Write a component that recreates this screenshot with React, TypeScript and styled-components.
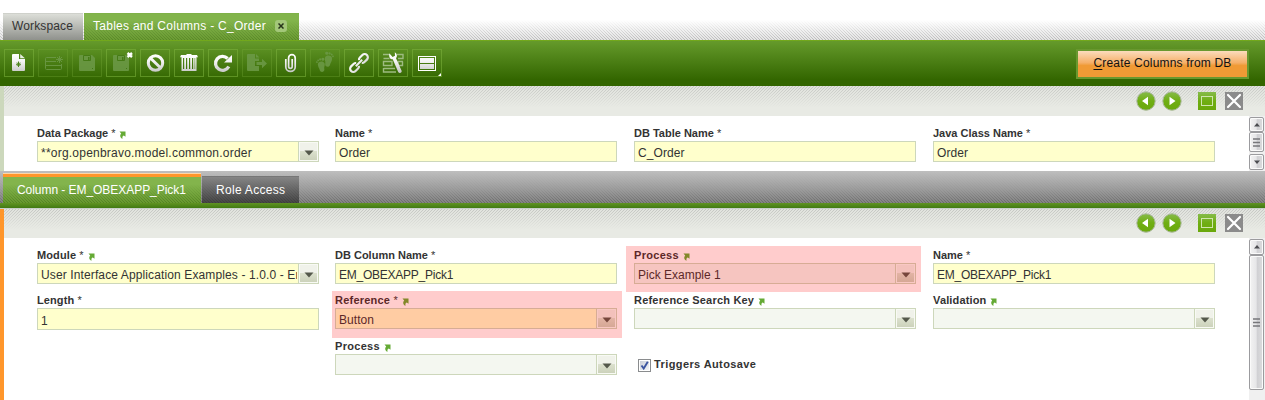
import React from "react";
import styled, { createGlobalStyle, css } from "styled-components";

const GlobalStyle = createGlobalStyle`
  *, *::before, *::after { box-sizing: border-box; }
  html, body { margin: 0; padding: 0; overflow: hidden; background: #fff; }
  body { font-family: "Liberation Sans", Arial, sans-serif; color: #333; }
  svg { display: block; flex: none; }
`;

const hatch = (color: string, angle = 45) =>
  `linear-gradient(${angle}deg, ${color} 16.6%, transparent 16.6% 50%, ${color} 50% 66.6%, transparent 66.6%) 0 0 / 3px 3px`;

const Window = styled.div`
  width: 1265px;
  height: 400px;
  display: flex;
  flex-direction: column;
  overflow: hidden;
`;

const TopTabs = styled.div`
  height: 40px;
  padding: 13px 0 0 3px;
  display: flex;
  gap: 1px;
  align-items: flex-start;
  background: linear-gradient(#fff 50%, rgba(255, 255, 255, 0)), ${hatch("#b9b9b9")}, #e4e4e4;
`;

const TopTab = styled.div<{ $active?: boolean; $width: number }>`
  width: ${(p) => p.$width}px;
  height: 27px;
  padding: 0 0 2px 9px;
  display: flex;
  align-items: center;
  font-size: 12px;
  white-space: pre;
  border-top: 1px solid ${(p) => (p.$active ? "#7fb148" : "#cfd1cb")};
  ${(p) =>
    p.$active
      ? css`
          color: #fff;
          letter-spacing: 0.27px;
          background: linear-gradient(#82b44b 25%, rgba(110, 160, 50, 0.2)), ${hatch("#527f25")}, #6a9a33;
        `
      : css`
          color: #333;
          letter-spacing: 0.14px;
          background: linear-gradient(#dcded8, #8f918c);
        `}
`;

const CloseBadge = styled.span`
  width: 12px;
  height: 12px;
  margin-left: 9px;
  border-radius: 3px;
  display: grid;
  place-items: center;
  background: #a3c779;
`;

const Toolbar = styled.div`
  height: 46px;
  padding: 0 16px 0 4px;
  display: flex;
  align-items: center;
  border-top: 1px solid #72a81c;
  background: linear-gradient(#659a2b, #336600 86%);
`;

const ToolButtons = styled.div`
  display: flex;
  gap: 4px;
  margin-top: -1px;
`;

const ToolButton = styled.div<{ $off?: boolean }>`
  width: 30px;
  height: 28px;
  border: 1px solid ${(p) => (p.$off ? "rgba(120,170,60,.32)" : "rgba(125,178,62,.55)")};
  svg { margin: -1px; }
`;

const ActionButton = styled.div`
  width: 173px;
  height: 30px;
  margin-left: auto;
  padding-bottom: 1px;
  border: 2px solid #69982f;
  display: flex;
  align-items: center;
  justify-content: center;
  color: #111;
  font-size: 12px;
  letter-spacing: 0.18px;
  white-space: pre;
  background: linear-gradient(#fbdcbd, #f5b069 45%, #f09a35 56%, #f09a35);
  u { text-underline-offset: 2px; text-decoration-thickness: 1px; }
`;

const Panel = styled.div<{ $color: string; $height: number }>`
  height: ${(p) => p.$height}px;
  flex: none;
  border-left: 4px solid ${(p) => p.$color};
  display: flex;
  flex-direction: column;
`;

const PanelBar = styled.div<{ $height: number; $low?: number }>`
  height: ${(p) => p.$height}px;
  flex: none;
  padding: 0 22px ${(p) => p.$low ?? 0}px 0;
  display: flex;
  justify-content: flex-end;
  align-items: center;
  background: linear-gradient(rgba(232, 234, 228, 0.1), #e8eae4 72%), ${hatch("#c0c2be", 135)}, #e0e2dd;
`;

const PanelBody = styled.div`
  flex: 1;
  min-height: 0;
  display: flex;
  justify-content: space-between;
  background: #fff;
`;

const Form = styled.div`
  padding: 7px 0 0 28px;
  display: grid;
  grid-template-columns: 290px 294px 295px 290px;
  column-gap: 4px;
  align-content: start;
`;

const Cell = styled.div<{ $height: number; $mark?: number; $pad?: number; $shift?: number; $width?: number }>`
  height: ${(p) => p.$height}px;
  width: ${(p) => (p.$width ? `${p.$width}px` : "auto")};
  padding: 4px 0 0 ${(p) => p.$pad ?? 5}px;
  margin-left: ${(p) => p.$shift ?? 0}px;
  position: relative;
  ${(p) =>
    p.$mark &&
    css`
      &::after {
        content: "";
        position: absolute;
        left: 0;
        right: 0;
        top: 1px;
        height: ${p.$mark}px;
        background: rgba(255, 0, 0, 0.2);
      }
    `}
`;

const Label = styled.div<{ $spacing: number }>`
  height: 14px;
  padding-bottom: 1px;
  display: flex;
  align-items: center;
  gap: 4px;
  font-size: 11px;
  font-weight: bold;
  line-height: 13px;
  letter-spacing: ${(p) => p.$spacing}px;
  white-space: pre;
  svg { margin-top: 2px; }
  i { font-style: normal; font-weight: normal; }
`;

const Input = styled.div<{ $empty?: boolean; $tall?: boolean }>`
  width: 282px;
  height: ${(p) => (p.$tall ? 22 : 21)}px;
  display: flex;
  border: 1px solid #cdd7bb;
  background: ${(p) => (p.$empty ? "#f4f7f0" : "#ffffcc")};
`;

const Value = styled.div<{ $tall?: boolean; $spacing: number }>`
  flex: 1;
  min-width: 0;
  padding: ${(p) => (p.$tall ? 2 : 1)}px 0 0 3px;
  margin-right: 1px;
  overflow: hidden;
  white-space: pre;
  font-size: 12px;
  line-height: 20px;
  letter-spacing: ${(p) => p.$spacing}px;
`;

const Drop = styled.div`
  width: 20px;
  border-left: 1px solid #cdd7bb;
  border-right: 1px solid #f8faf4;
  padding: 1px 0 1px 1px;
  background: #f8faf4;
  div {
    height: 100%;
    padding-top: 2px;
    display: grid;
    place-items: center;
    background: linear-gradient(#f0f2ea 0 48%, #dbe0cd 50%, #ccd2bb);
  }
`;

const CheckLine = styled.div`
  padding: 19px 0 0 9px;
  display: flex;
  gap: 3px;
  font-size: 11px;
  font-weight: bold;
  letter-spacing: 0.4px;
  line-height: 11px;
`;

const CheckBox = styled.div`
  width: 13px;
  height: 13px;
  border: 1px solid #8a8c8e;
  padding: 1px;
  background: #fff;
  svg { background: linear-gradient(135deg, #c9ced8, #f3f5f7); }
`;

const ScrollTrack = styled.div`
  width: 16px;
  padding: 1px 1px 0 0;
  display: flex;
  flex-direction: column;
  background: #f0f0f0;
`;

const ScrollPart = styled.div<{ $height: number; $gap?: number }>`
  height: ${(p) => p.$height}px;
  margin-top: ${(p) => p.$gap ?? 0}px;
  flex: none;
  display: grid;
  place-items: center;
  border: 1px solid #9b9b9e;
  border-radius: 2px;
  box-shadow: inset 0 0 0 1px #fafafa;
  background: linear-gradient(90deg, #f3f3f3, #e6e6e8 48%, #d0d0d3 55%, #dcdcde);
`;

const MidTabs = styled.div`
  height: 38px;
  flex: none;
  padding: 2px 0 0 3px;
  display: flex;
  align-items: flex-end;
  gap: 1px;
  border-bottom: 1px solid #c7cec9;
  background:
    linear-gradient(#609323, #417a12) 0 32px / 100% 5px no-repeat,
    linear-gradient(#bebebe, rgba(160, 160, 160, 0.85) 50%, rgba(120, 120, 120, 0.3) 88%),
    ${hatch("#606060")}, #868686;
`;

const MidTab = styled.div<{ $active?: boolean; $width: number }>`
  width: ${(p) => p.$width}px;
  height: ${(p) => (p.$active ? 30 : 27)}px;
  margin-bottom: 5px;
  padding-left: 14px;
  font-size: 12px;
  color: #fff;
  white-space: pre;
  ${(p) =>
    p.$active
      ? css`
          letter-spacing: -0.05px;
          border-top: 1px solid #ffd6a6;
          box-shadow: inset 0 3px #ff962b;
          line-height: 32px;
          background: linear-gradient(#83b44c 35%, rgba(100, 150, 45, 0.25)), ${hatch("#4c7a1f")}, #68992f;
        `
      : css`
          letter-spacing: 0.3px;
          border-top: 1px solid #777;
          line-height: 26px;
          background: linear-gradient(#858585, rgba(65, 65, 65, 0.5)), ${hatch("#363636")}, #4a4a4a;
        `}
`;

const TinyArrow = () => (
  <svg width="7" height="8" viewBox="0 0 7 8">
    <path d="M.5.5h6v5.300L4.800 4.400C3.400 5 3.200 6.200 3.600 7.800 1.200 6.800.4 4.400 2.200 2.400z" fill="#65aa35" />
  </svg>
);

type FieldProps = {
  label: string;
  value?: string;
  required?: boolean;
  link?: boolean;
  combo?: boolean;
  tall?: boolean;
  optional?: boolean;
  labelSpacing?: number;
  spacing?: number;
};

const Field = ({ label, value, required, link, combo, tall, optional, labelSpacing = 0.1, spacing = 0.1 }: FieldProps) => (
  <>
    <Label $spacing={labelSpacing}>
      <span>
        {label}
        {required && <i> *</i>}
      </span>
      {link && <TinyArrow />}
    </Label>
    <Input $empty={optional} $tall={tall}>
      <Value $tall={tall} $spacing={spacing}>{value}</Value>
      {combo && (
        <Drop>
          <div>
            <svg width="10" height="6"><path d="M.5.5h9L5 5.5z" fill="#54584b" /></svg>
          </div>
        </Drop>
      )}
    </Input>
  </>
);

const PanelControls = () => (
  <svg width="108" height="20" viewBox="0 0 108 20">
    <defs>
      <linearGradient id="leaf" x1="0" y1="0" x2="0" y2="1">
        <stop offset="0" stopColor="#86bb4a" />
        <stop offset=".5" stopColor="#6fae12" />
        <stop offset="1" stopColor="#6aa80c" />
      </linearGradient>
    </defs>
    <g fill="url(#leaf)" stroke="#a9b79b" strokeWidth="1">
      <circle cx="11" cy="10" r="9.2" />
      <circle cx="37" cy="10" r="9.2" />
    </g>
    <path d="M7 10l6-4.2v8.4zM40.500 10l-6-4.200v8.400z" fill="#fff" />
    <rect x="63" y="1" width="18" height="18" fill="url(#leaf)" />
    <rect x="66.500" y="5.500" width="11" height="9" fill="none" stroke="#cfe5ae" />
    <rect x="90" y="1" width="18" height="18" fill="#8b8b8b" />
    <path d="M93 4l12 12M105 4L93 16" stroke="#fff" strokeWidth="2.200" strokeLinecap="round" />
  </svg>
);

const Chevron = ({ down }: { down?: boolean }) => (
  <svg width="6" height="4"><path d={down ? "M0 .5h6L3 4z" : "M0 3.500h6L3 0z"} fill="#4b4c50" /></svg>
);

const Grip = () => (
  <svg width="8" height="9">
    <path d="M0 1h7M0 4.500h7M0 8h7" stroke="#77777b" strokeWidth="1.600" />
  </svg>
);

const W = "url(#silver)";
const G = "#6d9a48";

const Floppy = () => (
  <>
    <path d="M8 6h12l3 3v12a1 1 0 0 1-1 1H8a1 1 0 0 1-1-1V7a1 1 0 0 1 1-1z" fill={G} />
    <path d="M11.500 6.500h7v5h-7z" fill="none" stroke="#457a17" />
    <path d="M16 8h1.500v3H16zM20 19h1v1h-1z" fill="#457a17" />
  </>
);

const Footprint = () => (
  <>
    <path d="M.8 6.500C1.200 3.200 7 3 8 6.500c.5 2.500-1.600 3.500-1.300 6 .3 3.200-4.600 3.600-4.900.4C1.600 10.500.5 9 .8 6.500z" />
    <circle cx="7" cy="2" r="1.600" />
    <circle cx="4.200" cy="1.600" r="1.200" />
    <circle cx="1.900" cy="2.400" r="1" />
    <circle cx=".3" cy="4" r=".9" />
  </>
);

const tools: { off?: boolean; icon: React.ReactNode }[] = [
  {
    icon: (
      <>
        <path d="M9 5h6v5h6v11a1 1 0 0 1-1 1H9a1 1 0 0 1-1-1V6a1 1 0 0 1 1-1z" fill={W} />
        <path d="M16.200 5L21 9.200h-4.800z" fill="#e8eee2" />
        <path d="M14.500 12.500v5.500M12 15.250h5M13 13.600l3 3.200M16 13.600l-3 3.200" stroke="#4c841c" />
      </>
    ),
  },
  {
    off: true,
    icon: (
      <g fill="none" stroke={G}>
        <path d="M18 8.500H8.500a1 1 0 0 0-1 1v10a1 1 0 0 0 1 1h14a1 1 0 0 0 1-1V15M7.500 12.500H18M7.500 16.500h16" />
        <path d="M21.500 7v7M18 10.500h7M19 8l5 5M24 8l-5 5" />
      </g>
    ),
  },
  { off: true, icon: <Floppy /> },
  {
    icon: (
      <>
        <g opacity=".85"><Floppy /></g>
        <path d="M21.500 4l4.500 4M26 4l-4.500 4" stroke="#fff" strokeWidth="2.400" />
      </>
    ),
  },
  {
    icon: (
      <g fill="none" stroke={W} strokeWidth="3">
        <circle cx="15.500" cy="14" r="7.200" />
        <path d="M10.300 9l10.400 10" />
      </g>
    ),
  },
  {
    icon: (
      <path
        fillRule="evenodd"
        fill={W}
        d="M12.500 6V5h5v1H23l1 2.200h-1.500V22h-15V8.200H6L7 6zM9 9h1.200v11H9zM12 9h1.200v11H12zM15 9h1.200v11H15zM18 9h1.200v11H18zM20.600 9h.6v11h-.6z"
      />
    ),
  },
  {
    icon: (
      <>
        <path d="M20.800 17.500a7 7 0 1 1-1.200-8" fill="none" stroke={W} strokeWidth="3.300" />
        <path d="M24 6v7.500h-8z" fill={W} />
      </>
    ),
  },
  {
    off: true,
    icon: (
      <g fill={G}>
        <path d="M6 5h7v4.500h4V12h-4v5h4v5H6a1 1 0 0 1-1-1V6a1 1 0 0 1 1-1zM14 5l3.500 3.500H14z" />
        <path d="M14.500 13H20v-3.200l5 4.800-5 4.700V16h-5.500z" />
      </g>
    ),
  },
  {
    icon: (
      <path
        d="M9.800 10v8a4.300 4 0 0 0 9.400 0V9a3.200 3.200 0 0 0-6.600 0v8.500a1.700 1.700 0 0 0 3.600 0V10"
        fill="none"
        stroke={W}
        strokeWidth="1.700"
      />
    ),
  },
  {
    off: true,
    icon: (
      <g fill={G}>
        <g transform="translate(24 3.500) rotate(10) scale(-1 1)"><Footprint /></g>
        <g transform="translate(6 9.500) rotate(-10) scale(.95)"><Footprint /></g>
      </g>
    ),
  },
  {
    icon: (
      <g transform="rotate(-45 15 14)" fill="none" stroke={W} strokeWidth="2.200">
        <path d="M13 16a3.200 3.200 0 0 1-2.500 1.200H7a3.200 3.200 0 0 1 0-6.400h3.500a3.200 3.200 0 0 1 2.500 1.200" />
        <path d="M17 12a3.200 3.200 0 0 1 2.500-1.200H23a3.200 3.200 0 0 1 0 6.400h-3.500A3.200 3.200 0 0 1 17 16" />
        <path d="M10.500 14h9" strokeWidth="2" />
      </g>
    ),
  },
  {
    icon: (
      <>
        <path
          d="M5 5.500h7M19 5.500h6v4h-5M5.500 9.500h6M5.500 12.500H14v4H5.500zM25 12.500h-5v4h4.500v-4M5.500 19.500H17M5.500 19v4H18"
          fill="none"
          stroke="#9dbb80"
          strokeWidth="1.400"
        />
        <path
          d="M11.500 4.500c-1 3.500.6 5.800 3.200 5.800L20.200 23c1 1.800 4.200.8 3.400-1.200L18 9.300c1.600-1.800 1.200-4.800-1.200-6l.2 3.400-2.400 1.200z"
          fill={W}
        />
      </>
    ),
  },
  {
    icon: (
      <>
        <rect x="6.500" y="7.500" width="17" height="14" fill="none" stroke="#fff" />
        <path d="M8 9h14v5H8zM8 15h14v5H8z" fill={W} />
        <path d="M29 24v3h-3z" fill="#fff" />
      </>
    ),
  },
];

export default function App() {
  return (
    <Window>
      <GlobalStyle />
      <TopTabs>
        <TopTab $width={80}>Workspace</TopTab>
        <TopTab $active $width={215}>
          Tables and Columns - C_Order
          <CloseBadge>
            <svg width="6" height="6"><path d="M.5.5l5 5M5.500.5l-5 5" stroke="#26331a" strokeWidth="1.500" /></svg>
          </CloseBadge>
        </TopTab>
      </TopTabs>
      <Toolbar>
        <ToolButtons>
          {tools.map((t, i) => (
            <ToolButton key={i} $off={t.off}>
              <svg width="30" height="28" viewBox="0 0 30 28">
                {i === 0 && (
                  <defs>
                    <linearGradient id="silver" gradientUnits="userSpaceOnUse" x1="0" y1="5" x2="0" y2="23">
                      <stop offset="0" stopColor="#fff" />
                      <stop offset=".4" stopColor="#f4f4f4" />
                      <stop offset="1" stopColor="#c6c8c6" />
                    </linearGradient>
                  </defs>
                )}
                {t.off ? <g opacity=".85">{t.icon}</g> : t.icon}
              </svg>
            </ToolButton>
          ))}
        </ToolButtons>
        <ActionButton><span><u>C</u>reate Columns from DB</span></ActionButton>
      </Toolbar>

      <Panel $color="#ccd8bc" $height={85}>
        <PanelBar $height={30}><PanelControls /></PanelBar>
        <PanelBody>
          <Form>
            <Cell $height={48}><Field label="Data Package" labelSpacing={-0.03} value="**org.openbravo.model.common.order" spacing={0.22} required link combo /></Cell>
            <Cell $height={48} $shift={4}><Field label="Name" labelSpacing={0} value="Order" spacing={0.1} required /></Cell>
            <Cell $height={48} $pad={10}><Field label="DB Table Name" labelSpacing={0} value="C_Order" required /></Cell>
            <Cell $height={48} $pad={10}><Field label="Java Class Name" labelSpacing={0} value="Order" spacing={0.1} required /></Cell>
          </Form>
          <ScrollTrack>
            <ScrollPart $height={15}><Chevron /></ScrollPart>
            <ScrollPart $height={20}><Grip /></ScrollPart>
            <ScrollPart $height={16} $gap={2}><Chevron down /></ScrollPart>
          </ScrollTrack>
        </PanelBody>
      </Panel>

      <MidTabs>
        <MidTab $active $width={198}>Column - EM_OBEXAPP_Pick1</MidTab>
        <MidTab $width={97}>Role Access</MidTab>
      </MidTabs>

      <Panel $color="#ff962b" $height={191}>
        <PanelBar $height={29} $low={1}><PanelControls /></PanelBar>
        <PanelBody>
          <Form>
            <Cell $height={45}><Field label="Module" value="User Interface Application Examples - 1.0.0 - English" spacing={0.12} required link combo /></Cell>
            <Cell $height={45} $shift={4}><Field label="DB Column Name" labelSpacing={0} value="EM_OBEXAPP_Pick1" spacing={-0.25} required /></Cell>
            <Cell $height={45} $pad={8} $shift={2} $width={295} $mark={46}><Field label="Process" labelSpacing={0.3} value="Pick Example 1" spacing={0} link combo optional /></Cell>
            <Cell $height={45} $pad={10}><Field label="Name" labelSpacing={0} value="EM_OBEXAPP_Pick1" spacing={-0.25} required /></Cell>
            <Cell $height={46}><Field label="Length" value="1" required tall /></Cell>
            <Cell $height={46} $pad={3} $shift={6} $width={290} $mark={47}><Field label="Reference" labelSpacing={0.22} value="Button" spacing={0.05} required link combo /></Cell>
            <Cell $height={46} $pad={10}><Field label="Reference Search Key" labelSpacing={0.2} link combo optional /></Cell>
            <Cell $height={46} $pad={10}><Field label="Validation" labelSpacing={0.15} link combo optional /></Cell>
            <Cell $height={45} />
            <Cell $height={45} $shift={4}><Field label="Process" labelSpacing={0.3} link combo optional /></Cell>
            <Cell $height={45}>
              <CheckLine>
                <CheckBox>
                  <svg width="9" height="9"><path d="M1.500 4.500l2.200 3L7.800.8" fill="none" stroke="#3b55a0" strokeWidth="1.900" /></svg>
                </CheckBox>
                Triggers Autosave
              </CheckLine>
            </Cell>
          </Form>
          <ScrollTrack>
            <ScrollPart $height={16}><Chevron /></ScrollPart>
            <ScrollPart $height={135}><Grip /></ScrollPart>
          </ScrollTrack>
        </PanelBody>
      </Panel>
    </Window>
  );
}
